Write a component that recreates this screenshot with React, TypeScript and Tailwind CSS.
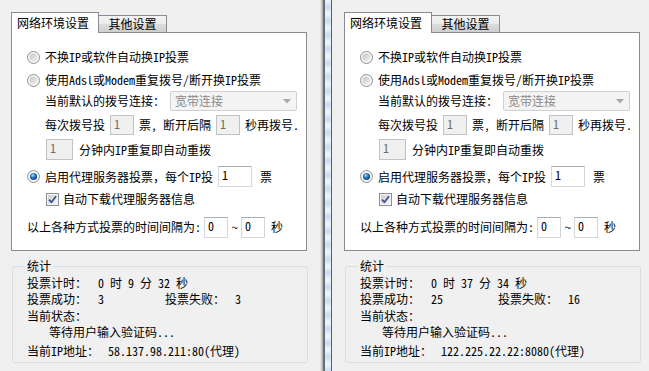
import React from "react";

type Stats = { time: string; ok: string; fail: string; ip: string };

function Radio({ checked }: { checked?: boolean }) {
  return (
    <svg width="13" height="13" viewBox="0 0 13 13" className="shrink-0">
      <defs>
        <linearGradient id="rIn" x1="0" y1="0" x2="1" y2="1">
          <stop offset="0" stopColor="#c4c4c4" />
          <stop offset="1" stopColor="#f4f4f4" />
        </linearGradient>
        <radialGradient id="rDot" cx="0.4" cy="0.35" r="0.7">
          <stop offset="0" stopColor="#a9e0ff" />
          <stop offset="0.45" stopColor="#2a79c0" />
          <stop offset="1" stopColor="#0b3d73" />
        </radialGradient>
      </defs>
      <circle cx="6.5" cy="6.5" r="6" fill="#f6f6f6" stroke="#8e8f8f" />
      {checked ? (
        <circle cx="6.5" cy="6.5" r="3.6" fill="url(#rDot)" />
      ) : (
        <circle cx="6.5" cy="6.5" r="4" fill="url(#rIn)" />
      )}
    </svg>
  );
}

function Check() {
  return (
    <svg width="13" height="13" viewBox="0 0 13 13" className="shrink-0">
      <defs>
        <linearGradient id="cIn" x1="0" y1="0" x2="1" y2="1">
          <stop offset="0" stopColor="#cfcfcf" />
          <stop offset="1" stopColor="#f6f6f6" />
        </linearGradient>
      </defs>
      <rect x="0.5" y="0.5" width="12" height="12" fill="#f6f6f6" stroke="#8e8f8f" />
      <rect x="2" y="2" width="9" height="9" fill="url(#cIn)" />
      <path d="M3 6.6 L5.4 9.2 L10 3.2" fill="none" stroke="#34508f" strokeWidth="1.7" />
    </svg>
  );
}

function Window({ s, className }: { s: Stats; className: string }) {
  const off = "h-[20px] border border-[#c2c2c2] bg-[#f0f0f0] pl-[3px] leading-[15px] text-[#6d6d6d]";
  const on = "h-[21px] border border-[#d3d6dc] border-t-[#abadb3] bg-white pl-[3px] leading-[15px]";
  return (
    <div className={className}>
      {/* tabs */}
      <div className="mt-[12px] flex h-[20px] items-end">
        <div className="relative z-10 -mb-px flex h-[21px] w-[88px] items-center border border-b-0 border-[#898c95] bg-white pl-[5px]">
          网络环境设置
        </div>
        <div className="flex h-[17px] w-[68px] items-center justify-center border border-b-0 border-l-0 border-[#898c95] bg-[linear-gradient(to_bottom,#f3f3f3_0%,#ebebeb_50%,#dddddd_50%,#cfcfcf_100%)]">
          其他设置
        </div>
      </div>

      {/* tab panel */}
      <div className="flex h-[219px] w-[296px] flex-col border border-[#898c95] bg-white pl-[15px]">
        <div className="mt-[14px] flex h-[20px] items-center gap-[5px]">
          <Radio />
          不换IP或软件自动换IP投票
        </div>
        <div className="mt-[3px] flex h-[20px] items-center gap-[5px]">
          <Radio />
          使用Adsl或Modem重复拨号/断开换IP投票
        </div>
        <div className="mt-[1px] flex h-[20px] items-center pl-[18px]">
          当前默认的拨号连接：
          <div className="ml-[5px] flex h-[20px] w-[127px] items-center justify-between rounded-[2px] border border-[#d0d0d0] bg-[#f4f4f4] pl-[4px] pr-[5px] text-[#8a8a8a]">
            宽带连接
            <svg width="8" height="5" viewBox="0 0 8 5">
              <path d="M0 0 H8 L4 4.5 Z" fill="#a8a8a8" />
            </svg>
          </div>
        </div>
        <div className="mt-[4px] flex h-[20px] items-center pl-[18px]">
          每次拨号投
          <div className={`ml-[5px] w-[24px] ${off}`}>1</div>
          <span className="ml-[5px] whitespace-pre">票, 断开后隔</span>
          <div className={`ml-[5px] w-[24px] ${off}`}>1</div>
          <span className="ml-[5px]">秒再拨号.</span>
        </div>
        <div className="mt-[4px] flex h-[21px] items-center pl-[19px]">
          <div className={`w-[27px] ${off} h-[21px]`}>1</div>
          <span className="ml-[6px]">分钟内IP重复即自动重拨</span>
        </div>
        <div className="mt-[6px] flex h-[21px] items-center">
          <Radio checked />
          <span className="ml-[5px]">启用代理服务器投票，每个IP投</span>
          <div className={`ml-[5px] w-[34px] ${on}`}>1</div>
          <span className="ml-[8px]">票</span>
        </div>
        <div className="mt-[2px] flex h-[20px] items-center pl-[19px]">
          <Check />
          <span className="ml-[4px]">自动下载代理服务器信息</span>
        </div>
        <div className="mt-[8px] flex h-[20px] items-center">
          以上各种方式投票的时间间隔为:
          <div className={`ml-[3px] h-[20px] w-[24px] ${on}`}>0</div>
          <span className="ml-[4px]">~</span>
          <div className={`ml-[3px] h-[20px] w-[24px] ${on}`}>0</div>
          <span className="ml-[6px]">秒</span>
        </div>
      </div>

      {/* stats group */}
      <div className="relative ml-[1px] mt-[15px] flex h-[97px] w-[296px] flex-col rounded-[3px] border border-[#d5dfe5] pl-[14px] pt-[8px]">
        <span className="absolute left-[12px] top-[-9px] bg-[#f0f0f0] px-[2px]">统计</span>
        <div className="flex h-[16px] items-center whitespace-pre">
          <span className="w-[71px]">投票计时：</span>
          <span>{s.time}</span>
        </div>
        <div className="flex h-[16px] items-center">
          <span className="w-[71px]">投票成功：</span>
          <span className="w-[67px]">{s.ok}</span>
          <span className="w-[70px]">投票失败：</span>
          <span>{s.fail}</span>
        </div>
        <div className="mt-[1px] flex h-[16px] items-center">当前状态：</div>
        <div className="flex h-[16px] items-center pl-[22px]">等待用户输入验证码...</div>
        <div className="mt-[3px] flex h-[16px] items-center">
          <span className="w-[81px]">当前IP地址：</span>
          <span>{s.ip}</span>
        </div>
      </div>
    </div>
  );
}

export default function App() {
  return (
    <div className="flex h-[371px] w-[649px] overflow-hidden bg-[#f0f0f0] font-['Noto_Sans_Mono_CJK_SC','Noto_Sans_CJK_SC',sans-serif] text-[12px] leading-[16px] text-black">
      <Window
        className="w-[320px] shrink-0 pl-[11px]"
        s={{ time: "0 时 9 分 32 秒", ok: "3", fail: "3", ip: "58.137.98.211:80(代理)" }}
      />
      {/* splitter between the two windows */}
      <div className="w-[3px] shrink-0 bg-[linear-gradient(to_right,#f0f0f0,#a8a8a8)]" />
      <div className="w-[2px] shrink-0 bg-[#6b6e70]" />
      <div className="w-[6px] shrink-0 bg-[repeating-linear-gradient(to_bottom,#eef6fd_0px,#c9ddf1_7px,#eef6fd_14px)]" />
      <div className="w-[1px] shrink-0 bg-[#5c5f61]" />
      <Window
        className="flex-1 pl-[12px]"
        s={{ time: "0 时 37 分 34 秒", ok: "25", fail: "16", ip: "122.225.22.22:8080(代理)" }}
      />
    </div>
  );
}
